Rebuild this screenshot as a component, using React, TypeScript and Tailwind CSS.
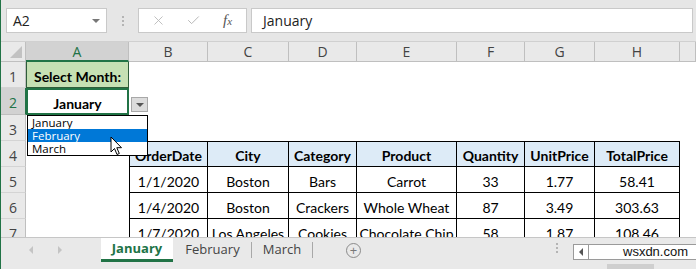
import { Check, X } from 'lucide-react';

const cols = ['A', 'B', 'C', 'D', 'E', 'F', 'G', 'H', ''];

const tableRows = [
  ['OrderDate', 'City', 'Category', 'Product', 'Quantity', 'UnitPrice', 'TotalPrice'],
  ['1/1/2020', 'Boston', 'Bars', 'Carrot', '33', '1.77', '58.41'],
  ['1/4/2020', 'Boston', 'Crackers', 'Whole Wheat', '87', '3.49', '303.63'],
  ['1/7/2020', 'Los Angeles', 'Cookies', 'Chocolate Chip', '58', '1.87', '108.46'],
];

function RowHeader({ n, active }: { n: number; active?: boolean }) {
  return (
    <div
      className={
        'flex items-center justify-center border-b border-r pt-[3px] text-[14px] font-["Open_Sans",sans-serif] ' +
        (active
          ? 'bg-[#d2d2d2] text-[#217346] border-b-[#bfbfbf] border-r-[#217346]'
          : 'bg-[#e9e9e9] text-[#444] border-b-[#d4d4d4] border-r-[#bfbfbf]')
      }
    >
      {n}
    </div>
  );
}

function Empty({ n }: { n: number }) {
  return (
    <>
      {Array.from({ length: n }).map((_, i) => (
        <div key={i} className="bg-white" />
      ))}
    </>
  );
}

export default function App() {
  return (
    <div className="relative w-[696px] h-[269px] overflow-hidden flex flex-col bg-[#e6e6e6] border-l border-[#217346] font-['Open_Sans',sans-serif]">
      {/* formula bar */}
      <div className="h-[42px] flex items-start pt-[8px] border-b border-[#d0d0d0]">
        <div className="ml-[5px] w-[101px] h-[25px] bg-white border border-[#c9c9c9] flex items-center justify-between pl-[6px] pr-[6px]">
          <span className="text-[14px] text-[#222]">A2</span>
          <span className="w-0 h-0 border-l-[4px] border-r-[4px] border-t-[4px] border-l-transparent border-r-transparent border-t-[#777]" />
        </div>
        <div className="w-[31px] h-[25px] flex flex-col items-center justify-center gap-[2px]">
          <span className="w-[2px] h-[2px] bg-[#b4b4b4]" />
          <span className="w-[2px] h-[2px] bg-[#b4b4b4]" />
          <span className="w-[2px] h-[2px] bg-[#b4b4b4]" />
        </div>
        <div className="w-[109px] h-[25px] bg-white border border-[#c9c9c9] flex items-center">
          <div className="w-[38px] flex justify-center">
            <X size={15} strokeWidth={1.4} color="#b8b8b8" />
          </div>
          <div className="w-[32px] flex justify-center">
            <Check size={15} strokeWidth={1.6} color="#b8b8b8" />
          </div>
          <div className="w-[37px] flex justify-center font-['Liberation_Serif',serif] italic text-[#555] text-[15px] leading-none">
            f<span className="text-[11px] mt-[3px]">x</span>
          </div>
        </div>
        <div className="ml-[4px] mr-[3px] flex-1 h-[25px] bg-white border border-[#c9c9c9] flex items-center pl-[11px]">
          <span className="text-[14px] text-[#222]">January</span>
        </div>
      </div>

      {/* sheet */}
      <div className="h-[195px] overflow-hidden bg-white grid grid-cols-[25px_103px_79px_81px_68px_100px_68px_70px_85px_1fr] grid-rows-[20px_26px_27px_26px_26px_26px_26px_26px] font-['Lato',sans-serif]">
        {/* column headers */}
        <div className="relative bg-[#e9e9e9] border-r border-b border-[#bfbfbf]">
          <span className="absolute right-[3px] bottom-[3px] w-0 h-0 border-l-[12px] border-t-[12px] border-l-transparent border-t-transparent border-r-0 border-b-0 [border-bottom:12px_solid_#c2c2c2]" />
        </div>
        {cols.map((c, i) => (
          <div
            key={i}
            className={
              'flex items-center justify-center text-[14px] font-["Open_Sans",sans-serif] ' +
              (c === 'A'
                ? 'bg-[#d2d2d2] text-[#217346] border-b-2 border-[#217346] border-r border-r-[#bfbfbf]'
                : 'bg-[#e9e9e9] text-[#444] border-b border-[#bfbfbf] border-r')
            }
          >
            {c}
          </div>
        ))}

        {/* row 1 */}
        <RowHeader n={1} />
        <div className="bg-[#c6e0b4] border-x border-b border-[#2f5d3a] flex items-center justify-center pt-[3px] text-[14px] font-bold text-black">
          Select Month:
        </div>
        <Empty n={8} />

        {/* row 2 */}
        <RowHeader n={2} active />
        <div className="bg-white border-2 border-[#217346] flex items-center justify-center pt-[3px] text-[14px] font-bold text-black">
          January
        </div>
        <Empty n={8} />

        {/* row 3 */}
        <RowHeader n={3} />
        <Empty n={9} />

        {/* rows 4-7 */}
        {tableRows.map((row, r) => (
          <>
            <RowHeader key={'h' + r} n={r + 4} />
            <div key={'a' + r} className="bg-white" />
            {row.map((v, c) => (
              <div
                key={r + '-' + c}
                className={
                  'flex items-center justify-center whitespace-nowrap overflow-hidden pt-[3px] text-[14px] text-black border-r border-b border-black ' +
                  (r === 0 ? 'border-t font-bold bg-[#ddebf7] ' : 'bg-white ') +
                  (c === 0 ? 'border-l' : '')
                }
              >
                {v}
              </div>
            ))}
            <div key={'i' + r} className="bg-white" />
          </>
        ))}
      </div>

      {/* sheet tabs */}
      <div className="relative h-[32px] flex items-start border-t border-[#c6c6c6] bg-[#e9e9e9] font-['Open_Sans',sans-serif]">
        <div className="w-[100px] h-[24px] flex items-center">
          <span className="ml-[28px] w-0 h-0 border-t-[4px] border-b-[4px] border-r-[4px] border-t-transparent border-b-transparent border-r-[#c4c4c4]" />
          <span className="ml-[25px] w-0 h-0 border-t-[4px] border-b-[4px] border-l-[4px] border-t-transparent border-b-transparent border-l-[#c4c4c4]" />
        </div>
        <div className="w-[72px] h-[24px] bg-white border-b-[3px] border-[#217346] flex items-center justify-center text-[13px] font-bold text-[#217346]">
          January
        </div>
        <div className="w-[78px] h-[24px] flex items-center justify-center text-[13px] text-[#444] pl-[1px]">
          February
        </div>
        <div className="w-px h-[16px] mt-[4px] bg-[#a8a8a8]" />
        <div className="w-[60px] h-[24px] flex items-center justify-center text-[13px] text-[#444]">
          March
        </div>
        <div className="w-px h-[16px] mt-[4px] bg-[#a8a8a8]" />
        <div className="ml-[33px] mt-[5px] w-[15px] h-[15px] rounded-full border border-[#8a8a8a] flex items-center justify-center text-[13px] leading-none text-[#777]">
          +
        </div>
        <div className="ml-[195px] mt-[5px] flex flex-col gap-[2px]">
          <span className="w-[2px] h-[2px] bg-[#b4b4b4]" />
          <span className="w-[2px] h-[2px] bg-[#b4b4b4]" />
          <span className="w-[2px] h-[2px] bg-[#b4b4b4]" />
        </div>
        <div className="ml-[15px] mt-[6px] flex-1 h-[16px] bg-white border border-[#9a9a9a] border-r-0 flex">
          <div className="w-[15px] h-full border-r border-[#9a9a9a] flex items-center justify-center">
            <span className="w-0 h-0 border-t-[4px] border-b-[4px] border-r-[4px] border-t-transparent border-b-transparent border-r-[#555]" />
          </div>
        </div>
        <div className="absolute left-[606px] top-[26px] w-[47px] h-[6px] bg-[#cfcfcf]" />
        <span className="absolute left-[622px] top-[6px] text-[13px] leading-[16px] text-[#111] font-['Liberation_Sans',sans-serif]">
          wsxdn.com
        </span>
      </div>

      {/* data validation dropdown button */}
      <div className="absolute left-[130px] top-[97px] w-[17px] h-[15px] bg-[#dcdcdc] border border-[#a8a8a8] flex items-center justify-center">
        <span className="w-0 h-0 border-l-[4px] border-r-[4px] border-t-[4px] border-l-transparent border-r-transparent border-t-[#555]" />
      </div>

      {/* dropdown list */}
      <div className="absolute left-[26px] top-[115px] w-[121px] bg-white border border-black flex flex-col font-['Open_Sans',sans-serif] text-[11.5px] leading-[13px]">
        <div className="pl-[4px] text-black">January</div>
        <div className="pl-[4px] bg-[#0078d7] text-white">February</div>
        <div className="pl-[4px] text-black">March</div>
      </div>

      {/* mouse pointer */}
      <svg className="absolute left-[109px] top-[136px]" width="13" height="20" viewBox="0 0 13 20">
        <path
          d="M1 1 L1 16 L4.5 12.5 L7 18.5 L9.3 17.5 L6.8 11.7 L11.5 11.7 Z"
          fill="white"
          stroke="black"
          strokeWidth="1"
          strokeLinejoin="round"
        />
      </svg>
    </div>
  );
}
